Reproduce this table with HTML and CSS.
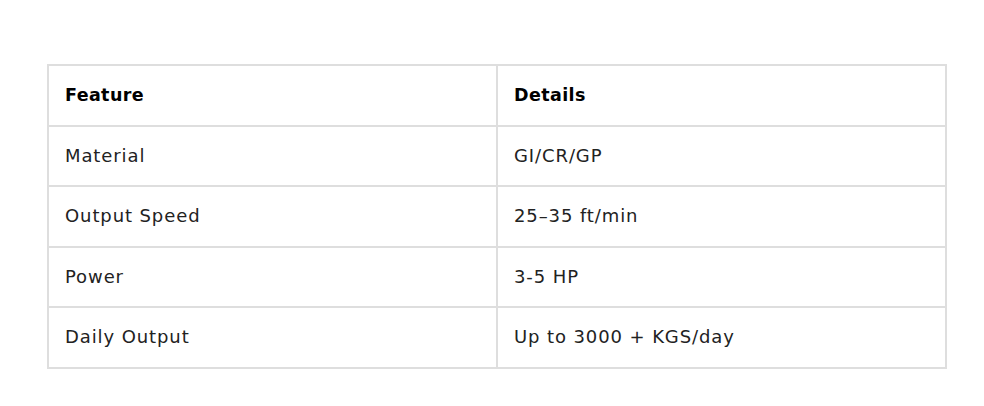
FILE: index.html
```html
<!DOCTYPE html>
<html>
<head>
<meta charset="utf-8">
<link rel="stylesheet" href="styles.css">
</head>
<body>
<div class="wrap">
<table class="spec">
<thead>
<tr><th>Feature</th><th>Details</th></tr>
</thead>
<tbody>
<tr><td>Material</td><td>GI/CR/GP</td></tr>
<tr><td>Output Speed</td><td>25–35 ft/min</td></tr>
<tr><td>Power</td><td>3-5 HP</td></tr>
<tr><td>Daily Output</td><td>Up to 3000 + KGS/day</td></tr>
</tbody>
</table>
</div>
</body>
</html>
```
FILE: styles.css
```css
html, body { margin: 0; padding: 0; background: #fff; }
.wrap { padding: 64px 0 0 47px; }
.spec {
  border-collapse: collapse;
  width: 900px;
  table-layout: fixed;
  font-family: "DejaVu Sans", Inter, sans-serif;
  font-size: 18px;
  letter-spacing: 0.9px;
  color: #222;
}
.spec th, .spec td {
  border: 2px solid #dedede;
  padding: 15px 16px 15px 16px;
  line-height: 28.6px;
  text-align: left;
  font-weight: 400;
}
.spec th { font-size: 17.5px; font-weight: 700; color: #000; letter-spacing: 0.4px; }
```
